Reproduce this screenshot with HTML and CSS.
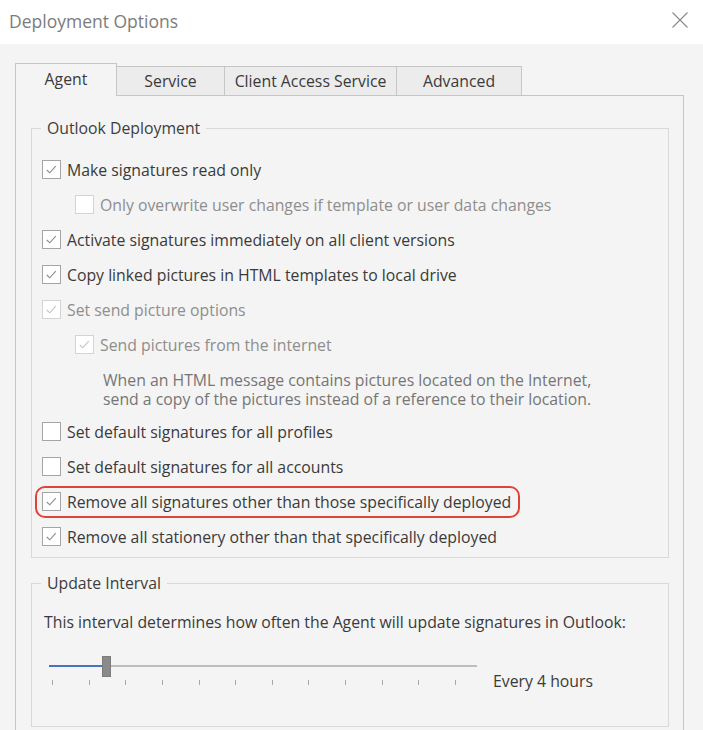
FILE: index.html
```html
<!DOCTYPE html>
<html>
<head>
<meta charset="utf-8">
<link rel="stylesheet" href="styles.css">
</head>
<body>
<div class="titlebar">
  <span class="title">Deployment Options</span>
  <svg class="close" width="16" height="16" viewBox="0 0 16 16"><path d="M0.5 0.5 L15.5 15.5 M15.5 0.5 L0.5 15.5" stroke="#8a8a8a" stroke-width="1.1" fill="none"/></svg>
</div>
<div class="content">
  <div class="tabs">
    <div class="tab active tab-agent">Agent</div>
    <div class="tab tab-service">Service</div>
    <div class="tab tab-client">Client Access Service</div>
    <div class="tab tab-adv">Advanced</div>
  </div>
  <div class="panel">
    <fieldset class="group outlook">
      <legend>Outlook Deployment</legend>
      <div class="row"><span class="cb"><svg viewBox="0 0 18 18"><path d="M4 9.5 L7.2 12.5 L13.5 5.5"/></svg></span><span>Make signatures read only</span></div>
      <div class="row sub disabled"><span class="cb"></span><span>Only overwrite user changes if template or user data changes</span></div>
      <div class="row"><span class="cb"><svg viewBox="0 0 18 18"><path d="M4 9.5 L7.2 12.5 L13.5 5.5"/></svg></span><span>Activate signatures immediately on all client versions</span></div>
      <div class="row"><span class="cb"><svg viewBox="0 0 18 18"><path d="M4 9.5 L7.2 12.5 L13.5 5.5"/></svg></span><span>Copy linked pictures in HTML templates to local drive</span></div>
      <div class="row disabled"><span class="cb"><svg viewBox="0 0 18 18"><path d="M4 9.5 L7.2 12.5 L13.5 5.5"/></svg></span><span>Set send picture options</span></div>
      <div class="row sub disabled"><span class="cb"><svg viewBox="0 0 18 18"><path d="M4 9.5 L7.2 12.5 L13.5 5.5"/></svg></span><span>Send pictures from the internet</span></div>
      <div class="note">
        <div class="note-line">When an HTML message contains pictures located on the Internet,</div>
        <div class="note-line">send a copy of the pictures instead of a reference to their location.</div>
      </div>
      <div class="row"><span class="cb"></span><span>Set default signatures for all profiles</span></div>
      <div class="row"><span class="cb"></span><span>Set default signatures for all accounts</span></div>
      <div class="row highlight"><span class="cb"><svg viewBox="0 0 18 18"><path d="M4 9.5 L7.2 12.5 L13.5 5.5"/></svg></span><span>Remove all signatures other than those specifically deployed</span></div>
      <div class="row"><span class="cb"><svg viewBox="0 0 18 18"><path d="M4 9.5 L7.2 12.5 L13.5 5.5"/></svg></span><span>Remove all stationery other than that specifically deployed</span></div>
    </fieldset>
    <fieldset class="group interval">
      <legend>Update Interval</legend>
      <div class="desc">This interval determines how often the Agent will update signatures in Outlook:</div>
      <div class="slider-row">
        <div class="slider">
          <div class="track"><div class="fill"></div></div>
          <div class="thumb"></div>
          <div class="ticks">
            <i></i><i></i><i></i><i></i><i></i><i></i><i></i><i></i><i></i><i></i><i></i><i></i>
          </div>
        </div>
        <div class="value">Every 4 hours</div>
      </div>
    </fieldset>
  </div>
</div>
</body>
</html>
```
FILE: styles.css
```css
html, body {
  margin: 0;
  padding: 0;
}
body {
  width: 703px;
  height: 730px;
  overflow: hidden;
  background: #f4f4f4;
  font-family: "Open Sans", "Noto Sans", sans-serif;
  font-size: 15.8px;
  color: #3a3a3a;
}
.titlebar {
  height: 44px;
  background: #ffffff;
  display: flex;
  align-items: center;
  justify-content: space-between;
  padding: 0 15px 0 9px;
}
.title {
  font-size: 17.5px;
  color: #7c7c7c;
  margin-top: -3px;
}
.close {
  display: block;
  margin-top: -4px;
}
.content {
  padding: 19px 0 0 15px;
}
.tabs {
  display: flex;
  align-items: flex-end;
  height: 32px;
  position: relative;
  z-index: 1;
}
.tab {
  box-sizing: border-box;
  height: 29px;
  border-top: 1px solid #c6c6c6;
  border-right: 1px solid #c6c6c6;
  background: #ececec;
  display: flex;
  align-items: center;
  justify-content: center;
  color: #3a3a3a;
}
.tab.active {
  height: 33px;
  margin-bottom: -1px;
  border-left: 1px solid #c6c6c6;
  background: #f4f4f4;
  padding-bottom: 3px;
}
.tab-agent { width: 102px; }
.tab-service { width: 108px; }
.tab-client { width: 172px; }
.tab-adv { width: 125px; }
.panel {
  box-sizing: border-box;
  width: 669px;
  border: 1px solid #c6c6c6;
  padding: 22px 14px 30px 15px;
}
.group {
  margin: 0;
  border: 1px solid #d9d9d9;
  padding: 14px 10px 3px 10px;
}
.group legend {
  padding: 0 6px;
  margin-left: -1px;
  line-height: 20px;
  color: #3e3e3e;
}
.row {
  height: 35px;
  display: flex;
  align-items: center;
}
.cb {
  box-sizing: border-box;
  width: 19px;
  height: 19px;
  border: 1px solid #a5a5a5;
  background: #ffffff;
  margin-right: 6px;
  flex: none;
  display: block;
}
.cb svg {
  display: block;
  width: 17px;
  height: 17px;
}
.cb svg path {
  fill: none;
  stroke: #8c8c8c;
  stroke-width: 1.2;
}
.row.sub {
  padding-left: 33px;
}
.row.disabled {
  color: #8e8e8e;
}
.row.disabled .cb {
  border-color: #d4d4d4;
}
.row.disabled .cb svg path {
  stroke: #c4c4c4;
}
.note {
  margin: 9px 0 5px 61px;
  color: #767676;
}
.note-line {
  height: 19px;
  line-height: 19px;
  white-space: nowrap;
}
.highlight {
  position: relative;
  display: inline-flex;
}
.highlight::after {
  content: "";
  position: absolute;
  left: -7px;
  right: -9px;
  top: 2px;
  bottom: 1px;
  border: 2px solid #de4536;
  border-radius: 10px;
}
.interval {
  margin-top: 15px;
  padding: 19px 10px 35px 10px;
}
.desc {
  line-height: 20px;
  margin-left: 2px;
}
.slider-row {
  display: flex;
  align-items: flex-start;
  margin-top: 23px;
}
.slider {
  position: relative;
  width: 428px;
  height: 30px;
  margin-left: 7px;
}
.track {
  margin-top: 10px;
  height: 2px;
  background: #bdbdbd;
}
.fill {
  width: 54px;
  height: 2px;
  background: #4a72c0;
}
.thumb {
  position: absolute;
  left: 53px;
  top: 1px;
  box-sizing: border-box;
  width: 9px;
  height: 21px;
  background: #8a8a8a;
  border: 1px solid #7c7c7c;
}
.ticks {
  display: flex;
  justify-content: space-between;
  width: 404px;
  margin: 13px 0 0 3px;
}
.ticks i {
  display: block;
  width: 1px;
  height: 5px;
  background: #a8a8a8;
}
.value {
  margin-left: 16px;
  margin-top: 16px;
  line-height: 20px;
}
```
